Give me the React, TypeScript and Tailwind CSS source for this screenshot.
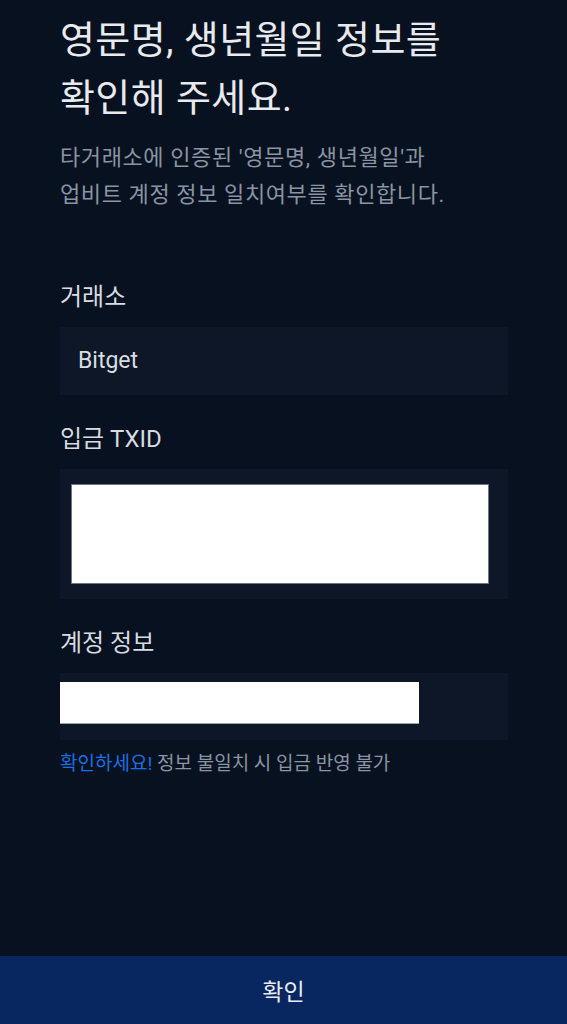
const font = "font-['Roboto','Noto_Sans_CJK_KR',sans-serif]";

const Label = ({ children }: { children: React.ReactNode }) => (
  <div className="text-[24px] leading-[30px] text-[#d8dce1] mb-[15px]">{children}</div>
);

export default function App() {
  return (
    <div className={`${font} h-[1024px] flex flex-col bg-[#071120]`}>
      <main className="flex-1 px-[60px] pt-[11px]">
        {/* Heading */}
        <h1 className="text-[38px] leading-[58px] text-[#e8eaed] tracking-[0.4px]">
          영문명, 생년월일 정보를
          <br />
          확인해 주세요.
        </h1>
        <p className="mt-[12px] text-[22px] leading-[37px] text-[#8a94a2] tracking-[0.6px]">
          타거래소에 인증된 '영문명, 생년월일'과
          <br />
          업비트 계정 정보 일치여부를 확인합니다.
        </p>

        {/* Exchange */}
        <div className="mt-[69px]">
          <Label>거래소</Label>
          <div className="h-[68px] w-[448px] bg-[#0d1728] flex items-center px-[18px]">
            <span className="text-[23px] text-[#d9dde2]">Bitget</span>
          </div>
        </div>

        {/* TXID */}
        <div className="mt-[29px]">
          <Label>입금 TXID</Label>
          <div className="h-[130px] w-[448px] bg-[#0d1728] pl-[11px] pr-[19px] py-[15px]">
            <div className="h-full bg-white border border-[#6b7585]" />
          </div>
        </div>

        {/* Account */}
        <div className="mt-[29px]">
          <Label>계정 정보</Label>
          <div className="h-[67px] w-[448px] bg-[#0d1728] pt-[9px]">
            <div className="h-[42px] w-[359px] bg-white border-b border-[#9aa3b0]" />
          </div>
        </div>

        <p className="mt-[12px] text-[19px] leading-[24px] text-[#8a94a2]">
          <span className="text-[#1c6fe0]">확인하세요!</span> 정보 불일치 시 입금 반영 불가
        </p>
      </main>

      <button className="h-[68px] w-full bg-[#08265f] text-[23px] text-[#e8ecf2] pt-[6px]">
        확인
      </button>
    </div>
  );
}
